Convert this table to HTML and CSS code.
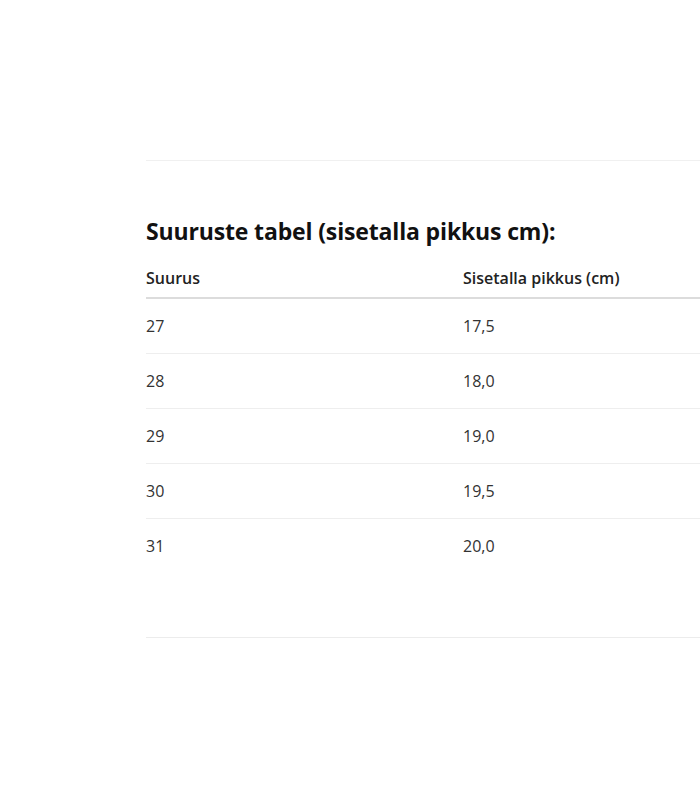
FILE: index.html
```html
<!DOCTYPE html>
<html lang="et">
<head>
<meta charset="utf-8">
<link rel="stylesheet" href="styles.css">
</head>
<body>
<main class="page">
  <section class="size-section">
    <h2 class="size-title">Suuruste tabel (sisetalla pikkus cm):</h2>
    <table class="size-table">
      <thead>
        <tr><th class="col-size">Suurus</th><th>Sisetalla pikkus (cm)</th></tr>
      </thead>
      <tbody>
        <tr><td>27</td><td>17,5</td></tr>
        <tr><td>28</td><td>18,0</td></tr>
        <tr><td>29</td><td>19,0</td></tr>
        <tr><td>30</td><td>19,5</td></tr>
        <tr><td>31</td><td>20,0</td></tr>
      </tbody>
    </table>
  </section>
</main>
</body>
</html>
```
FILE: styles.css
```css
html, body {
  margin: 0;
  padding: 0;
  background: #fff;
}
body {
  font-family: "Open Sans", "Noto Sans", "Liberation Sans", sans-serif;
  color: #222;
}
.page {
  padding: 160px 0 0 146px;
}
.size-section {
  border-top: 1px solid #f0f0f0;
  border-bottom: 1px solid #ececec;
  padding: 54px 0 64px;
}
.size-title {
  margin: 0 0 20px;
  font-size: 23px;
  line-height: 32px;
  font-weight: 700;
  letter-spacing: -0.15px;
  color: #111;
}
.size-table {
  width: 100%;
  border-collapse: collapse;
  table-layout: fixed;
}
.size-table .col-size {
  width: 317px;
}
.size-table th {
  text-align: left;
  font-weight: 600;
  font-size: 16px;
  line-height: 22px;
  padding: 0 0 8px;
  border-bottom: 2px solid #dcdcdc;
  color: #222;
}
.size-table td {
  font-size: 16px;
  line-height: 22px;
  padding: 16px 0;
  color: #333;
}
.size-table tbody tr + tr td {
  border-top: 1px solid #eeeeee;
}
```
